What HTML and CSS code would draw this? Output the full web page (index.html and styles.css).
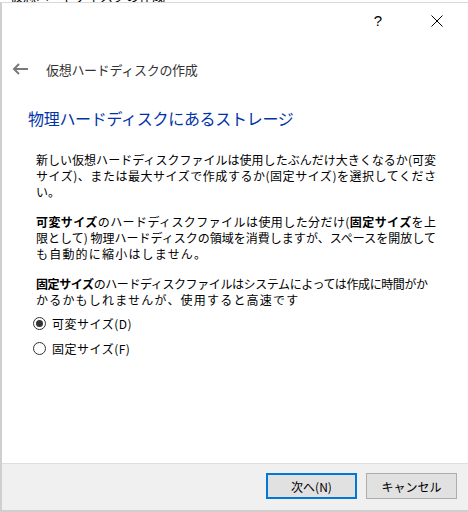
FILE: index.html
```html
<!DOCTYPE html>
<html lang="ja">
<head>
<meta charset="utf-8">
<title>仮想ハードディスクの作成</title>
<link rel="stylesheet" href="styles.css">
</head>
<body>
<div class="behind"><span>仮想ハードディスクの作成</span></div>
<div class="dialog">
  <div class="caption">
    <span class="cap-btn help">?</span>
    <span class="cap-btn close">
      <svg width="12" height="12" viewBox="0 0 12 12"><path d="M0.5 0.5 L11.5 11.5 M11.5 0.5 L0.5 11.5" stroke="#000" stroke-width="1" fill="none"/></svg>
    </span>
  </div>
  <div class="header">
    <svg class="back" width="16" height="12" viewBox="0 0 16 12"><path d="M16 6 H2 M7 1 L2 6 L7 11" stroke="#7a7a7a" stroke-width="2" fill="none"/></svg>
    <span class="title">仮想ハードディスクの作成</span>
  </div>
  <div class="content">
    <h1 class="heading">物理ハードディスクにあるストレージ</h1>
    <p class="para">
      <span class="line full">新しい仮想ハードディスクファイルは使用したぶんだけ大きくなるか(可変</span>
      <span class="line full">サイズ)、または最大サイズで作成するか(固定サイズ)を選択してくださ</span>
      <span class="line">い。</span>
    </p>
    <p class="para">
      <span class="line full"><b>可変サイズ</b>のハードディスクファイルは使用した分だけ(<b>固定サイズ</b>を上</span>
      <span class="line full">限として) 物理ハードディスクの領域を消費しますが、スペースを開放して</span>
      <span class="line loose">も自動的に縮小はしません。</span>
    </p>
    <p class="para">
      <span class="line tight"><b>固定サイズ</b>のハードディスクファイルはシステムによっては作成に時間がか</span>
      <span class="line loose">かるかもしれませんが、使用すると高速です</span>
    </p>
    <div class="options">
      <label class="radio"><span class="dot checked"></span>可変サイズ(D)</label>
      <label class="radio"><span class="dot"></span>固定サイズ(F)</label>
    </div>
  </div>
  <div class="footer">
    <button class="btn default">次へ(N)</button>
    <button class="btn">キャンセル</button>
  </div>
</div>
</body>
</html>
```

FILE: styles.css
```css
* { box-sizing: border-box; }
html, body { margin: 0; padding: 0; }
body {
  width: 468px;
  height: 512px;
  overflow: hidden;
  background: #ffffff;
  font-family: "Noto Sans CJK JP", "Noto Sans", sans-serif;
  font-size: 12px;
  color: #000;
}
.behind {
  height: 2px;
  overflow: hidden;
  padding-left: 10px;
}
.behind span {
  display: block;
  margin-top: -11px;
  font-size: 13px;
  line-height: 13px;
  color: #000;
}
.dialog {
  height: 510px;
  display: flex;
  flex-direction: column;
  border-left: 2px solid #cfcfcf;
  border-top: 1px solid #dadada;
  border-bottom: 2px solid #cfcfcf;
}
.caption {
  height: 35px;
  display: flex;
  justify-content: flex-end;
  align-items: center;
  gap: 13px;
  padding-right: 8px;
}
.cap-btn {
  width: 46px;
  height: 30px;
  display: flex;
  align-items: center;
  justify-content: center;
}
.help {
  font-family: "Liberation Sans", sans-serif;
  font-size: 15px;
  color: #000;
}
.header {
  height: 26px;
  margin-top: 18px;
  display: flex;
  align-items: center;
  padding-left: 10px;
  gap: 18px;
}
.back { display: block; }
.title {
  font-size: 13px;
  letter-spacing: -0.3px;
  color: #333;
}
.content {
  padding-left: 26px;
}
.heading {
  margin: 25px 0 0 0;
  font-size: 16px;
  line-height: 22px;
  font-weight: normal;
  color: #0033a8;
  letter-spacing: -0.3px;
}
.para {
  margin: 14px 0 0 0;
  padding-left: 8px;
  line-height: 16px;
}
.heading + .para { margin-top: 23px; }
.para b { font-weight: bold; }
.line {
  display: block;
  white-space: nowrap;
}
.full {
  width: 400px;
  text-align: justify;
  text-align-last: justify;
}
.tight { letter-spacing: -0.4px; }
.loose { letter-spacing: 1.2px; }
.options {
  margin-top: 5px;
  padding-left: 5px;
  display: flex;
  flex-direction: column;
  gap: 5px;
}
.radio {
  height: 20px;
  display: flex;
  align-items: center;
  gap: 6px;
  letter-spacing: 0.5px;
}
.dot {
  width: 13px;
  height: 13px;
  border: 1px solid #333;
  border-radius: 50%;
  background: #fff;
  display: flex;
  align-items: center;
  justify-content: center;
}
.dot.checked::after {
  content: "";
  width: 7px;
  height: 7px;
  border-radius: 50%;
  background: #333;
}
.footer {
  margin-top: auto;
  height: 47px;
  border-top: 1px solid #dfdfdf;
  background: #f0f0f0;
  display: flex;
  justify-content: flex-end;
  align-items: flex-start;
  gap: 9px;
  padding: 9px 11px 0 0;
}
.btn {
  width: 91px;
  height: 26px;
  margin: 0;
  padding: 0;
  background: #e1e1e1;
  border: 1px solid #adadad;
  font-family: "Noto Sans CJK JP", sans-serif;
  font-size: 12px;
  color: #000;
}
.btn.default { border: 2px solid #0078d7; }
```
